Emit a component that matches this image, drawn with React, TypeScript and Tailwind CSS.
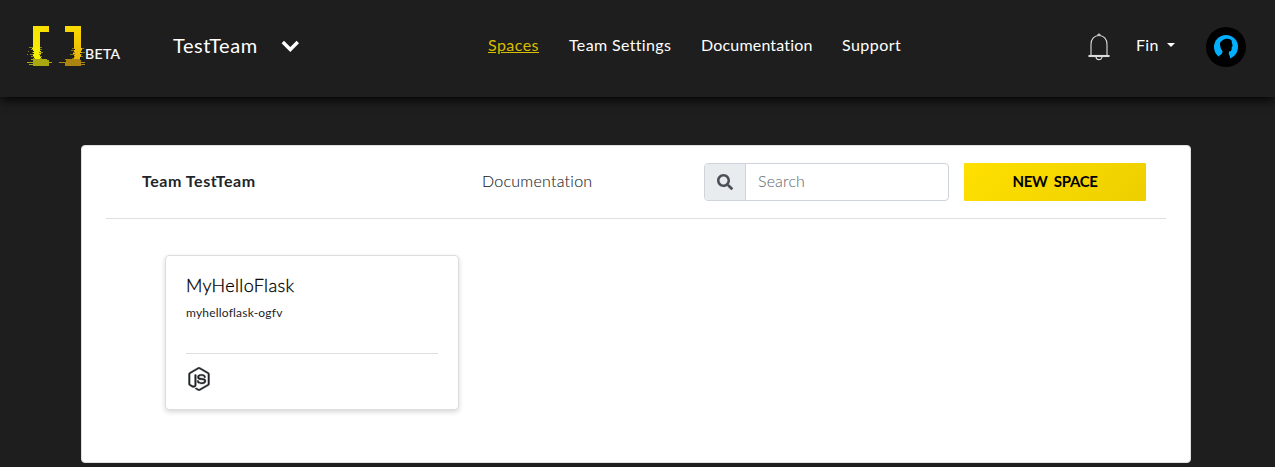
import { FaNodeJs, FaSearch } from "react-icons/fa";

type Slice = [x: number, y: number, w: number, h: number];

const leftBracket: Slice[] = [
  [33, 26, 16, 6], [33, 32, 7, 16], [32, 48, 8, 1], [33, 50, 7, 1],
  [34, 51, 7, 1], [34, 53, 7, 1], [33, 54, 6, 1],
  [34, 57, 7, 1], [35, 58, 5, 1], [33, 49, 7, 1], [33, 52, 6, 1], [33, 55, 7, 1], [34, 56, 6, 1],
];
const leftGlitch: Slice[] = [[29, 47, 13, 1], [31, 49, 11, 1], [28, 51, 1, 1], [32, 52, 11, 1], [27, 54, 1, 1], [30, 54, 11, 1], [31, 56, 11, 1], [33, 58, 9, 1]];
const leftFoot: Slice[] = [[31, 59, 16, 1], [33, 60, 16, 2], [27, 62, 25, 1], [33, 63, 16, 1], [29, 64, 20, 1], [33, 65, 16, 1]];
const rightBracket: Slice[] = [
  [65, 26, 16, 6], [74, 32, 7, 16], [74, 48, 8, 1], [75, 49, 7, 1], [74, 50, 7, 1],
  [74, 51, 7, 1], [75, 52, 7, 1], [73, 53, 7, 1], [75, 54, 6, 1], [74, 55, 7, 1],
  [75, 56, 6, 1], [74, 57, 6, 1], [74, 58, 6, 1],
];
const rightGlitch: Slice[] = [[72, 48, 12, 1], [71, 50, 11, 1], [73, 52, 12, 1], [70, 54, 12, 1], [74, 56, 9, 1], [72, 58, 8, 1]];
const rightFoot: Slice[] = [[65, 59, 15, 1], [66, 60, 15, 2], [59, 62, 26, 1], [65, 63, 16, 1], [65, 64, 20, 1], [65, 65, 16, 1]];

function Slices({ items, fill }: { items: Slice[]; fill: string }) {
  return (
    <g fill={fill}>
      {items.map(([x, y, w, h], i) => (
        <rect key={i} x={x} y={y} width={w} height={h} />
      ))}
    </g>
  );
}

function Logo() {
  return (
    <svg className="h-[44px] w-[60px] shrink-0" viewBox="26 24 60 44" aria-hidden="true">
      <defs>
        <linearGradient id="left-fill" gradientUnits="userSpaceOnUse" x1="49" y1="26" x2="33" y2="50">
          <stop stopColor="#fbdc00" />
          <stop offset="1" stopColor="#f5f000" />
        </linearGradient>
        <linearGradient id="right-fill" gradientUnits="userSpaceOnUse" x1="73" y1="26" x2="73" y2="59">
          <stop stopColor="#fadc00" />
          <stop offset="1" stopColor="#e9b405" />
        </linearGradient>
      </defs>
      <Slices items={leftGlitch} fill="#8c880f" />
      <Slices items={leftBracket} fill="url(#left-fill)" />
      <Slices items={leftFoot} fill="#a9a80f" />
      <Slices items={rightGlitch} fill="#8d7012" />
      <Slices items={rightBracket} fill="url(#right-fill)" />
      <Slices items={rightFoot} fill="#ab8510" />
    </svg>
  );
}

function Bell() {
  return (
    <svg className="h-[28px] w-[22px]" viewBox="0 0 22 28" fill="none" stroke="#dcdcdc" strokeWidth="1.1" aria-hidden="true">
      <path d="M3 22.500V11.500C3 6 6.300 2.500 11 2.500s8 3.500 8 9v11" />
      <path d="M1 22.500h20v1H1z" />
      <path d="M9.800 2.500a1.200 1.500 0 0 1 2.400 0M8 23.800a3 2.800 0 0 0 6 0" />
    </svg>
  );
}

function Avatar() {
  return (
    <svg className="h-10 w-10" viewBox="0 0 40 40" aria-hidden="true">
      <circle cx="20" cy="20" r="20" fill="#000" />
      <circle cx="20" cy="20" r="12" fill="#00b0ff" />
      <path d="M14 16.500c0-2 2-2.500 3-3.500 2-1.500 5.500-1.500 7.500-.5 1.500.8 1.500 2 1.300 3l.9 3.500-.9.700-.2 2.800-.6 1.500-2 .5-.3 2 1.200 3 .5 6H11l2.500-7c2-1 3.200-2 2.900-4.500-1.600-2-2.400-4-2.400-7.500z" fill="#000" />
    </svg>
  );
}

export default function App() {
  return (
    <div className="h-[467px] overflow-hidden bg-[#1e1e1e] font-['Lato',sans-serif] text-base text-[#212529]">
      <header className="relative flex h-[97px] items-start bg-[#1e1e1e] pl-[26px] text-white shadow-[0_3px_10px_rgba(0,0,0,0.9)]">
        <div className="flex w-[147px] pt-6">
          <Logo />
          <span className="-ml-px mt-5 text-sm leading-5 tracking-[0.4px] [-webkit-text-stroke:0.2px]">BETA</span>
        </div>
        <div className="flex w-[315px] items-center pt-[31px]">
          <span className="w-[108px] text-[20px] leading-7 tracking-[0.55px]">TestTeam</span>
          <svg className="mt-px h-3 w-[18px]" viewBox="0 0 18 12" fill="none" stroke="#fff" strokeWidth="3.4" aria-hidden="true">
            <path d="m1.800 2 7.500 7.500L16.800 2" />
          </svg>
        </div>
        <nav className="flex w-[600px] pt-[33px] leading-6">
          <a href="#" className="w-[81px] tracking-[0.45px] text-[#d9bd00] underline">Spaces</a>
          <a href="#" className="w-[132px] tracking-[0.35px]">Team Settings</a>
          <a href="#" className="w-[141px] tracking-[0.18px]">Documentation</a>
          <a href="#" className="tracking-[0.45px]">Support</a>
        </nav>
        <div className="w-[48px] pt-[33px]"><Bell /></div>
        <div className="flex w-[70px] items-center pt-[33px] leading-6">
          <span className="w-[31px] tracking-[0.3px]">Fin</span>
          <span className="border-x-4 border-t-4 border-x-transparent border-t-white" />
        </div>
        <div className="pt-[27px]"><Avatar /></div>
      </header>
      <main className="ml-[81px] mt-12 h-[318px] w-[1110px] rounded border border-[#dfdfdf] bg-white px-6">
        <div className="flex h-[73px] items-start border-b border-[#dedfe0] pt-[17px]">
          <h1 className="w-[340px] pl-9 font-bold leading-9 tracking-[0.54px]">Team TestTeam</h1>
          <a href="#" className="w-[258px] pl-9 font-light leading-9 tracking-[0.25px] text-[#212529] [-webkit-text-stroke:0.1px]">Documentation</a>
          <div className="flex h-[38px] w-[245px] overflow-hidden rounded border border-[#ced4da]">
            <span className="flex w-[41px] items-center justify-center border-r border-[#ced4da] bg-[#e9ecef] pr-px text-[#495057]"><FaSearch /></span>
            <input className="min-w-0 flex-1 px-3 pb-0.5 font-light tracking-[0.15px] outline-none placeholder:text-[#5c656d]" placeholder="Search" />
          </div>
          <button className="ml-[15px] h-[38px] w-[182px] rounded-[1px] bg-[linear-gradient(135deg,#ffe000,#edcf00)] pb-0.5 text-[15px] font-bold tracking-[-0.35px] text-black">NEW&nbsp; SPACE</button>
        </div>
        <article className="ml-[59px] mt-[36px] h-[155px] w-[294px] rounded border border-[#dcdddd] bg-white px-5 shadow-[0_2px_5px_rgba(0,0,0,0.16)]">
          <h2 className="pt-[17px] text-[18px] font-light leading-6 tracking-[0.35px] text-black [-webkit-text-stroke:0.3px]">MyHelloFlask</h2>
          <p className="mt-[7px] text-xs leading-[18px] tracking-[0.2px]">myhelloflask-ogfv</p>
          <div className="mt-[31px] border-t border-[#dedfe0] pl-px pt-[13px]">
            <FaNodeJs className="h-6 w-6" stroke="currentColor" strokeWidth="8" />
          </div>
        </article>
      </main>
    </div>
  );
}
